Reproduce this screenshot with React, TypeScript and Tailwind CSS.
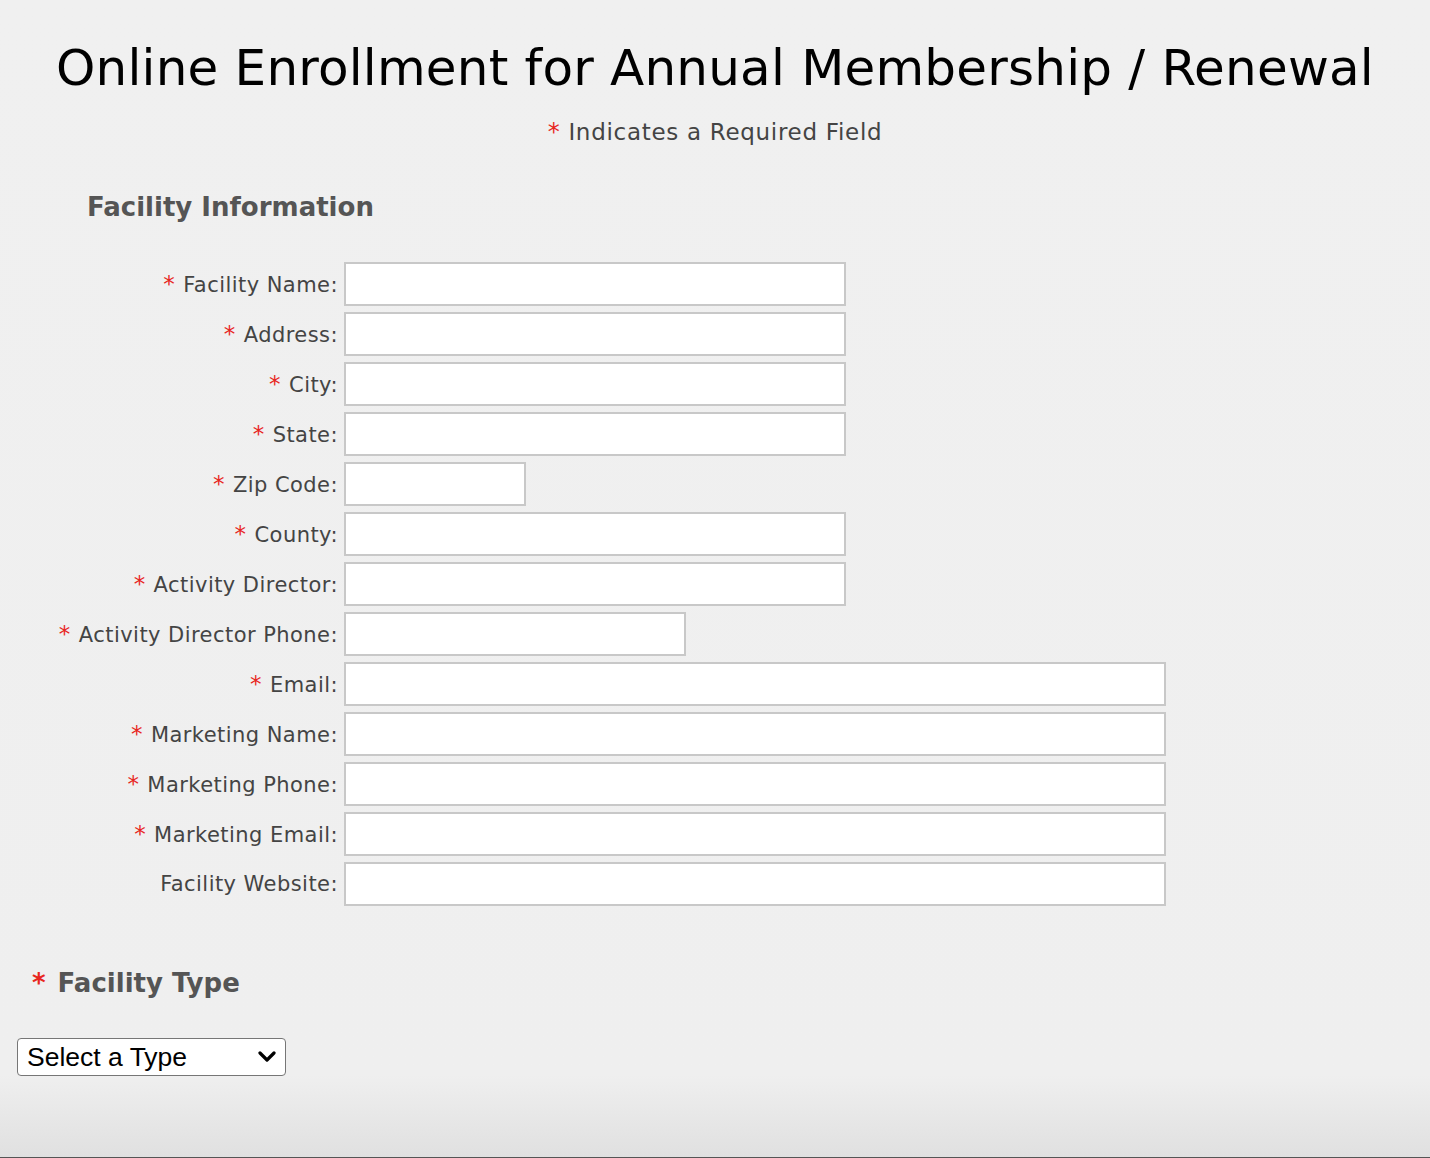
import React from "react";

const rows: { label: string; req: boolean; w: string }[] = [
  { label: "Facility Name", req: true, w: "w-[502px]" },
  { label: "Address", req: true, w: "w-[502px]" },
  { label: "City", req: true, w: "w-[502px]" },
  { label: "State", req: true, w: "w-[502px]" },
  { label: "Zip Code", req: true, w: "w-[182px]" },
  { label: "County", req: true, w: "w-[502px]" },
  { label: "Activity Director", req: true, w: "w-[502px]" },
  { label: "Activity Director Phone", req: true, w: "w-[342px]" },
  { label: "Email", req: true, w: "w-[822px]" },
  { label: "Marketing Name", req: true, w: "w-[822px]" },
  { label: "Marketing Phone", req: true, w: "w-[822px]" },
  { label: "Marketing Email", req: true, w: "w-[822px]" },
  { label: "Facility Website", req: false, w: "w-[822px]" },
];

export default function App() {
  return (
    <div className="min-h-[1158px] w-full bg-[linear-gradient(to_bottom,#f0f0f0_0px,#efefef_1075px,#e0e0e0_1157px)] border-b border-[#555] font-['Verdana','DejaVu_Sans',sans-serif] text-[#444] flex flex-col">
      <h1 className="text-center text-black text-[50px] leading-none pt-[43px] tracking-[0.2px]">
        Online Enrollment for Annual Membership / Renewal
      </h1>
      <p className="text-center text-[23px] mt-[27px] leading-none tracking-[0.7px]">
        <span className="text-[#e8261f] text-[24px]">*</span> Indicates a Required Field
      </p>
      <h2 className="font-bold text-[26px] text-[#555] ml-[87px] mt-[50px] leading-none">
        Facility Information
      </h2>
      <div className="flex flex-col gap-[6px] mt-[42px]">
        {rows.map((r) => (
          <div key={r.label} className="flex items-center">
            <label className="w-[338px] text-right text-[21px] leading-none tracking-[0.45px] whitespace-nowrap">
              {r.req && <span className="text-[#e8261f] text-[23px] mr-[8px]">*</span>}
              {r.label}:
            </label>
            <input
              type="text"
              className={`${r.w} h-[44px] ml-[6px] bg-white border-2 border-[#c8c8c8] outline-none`}
            />
          </div>
        ))}
      </div>
      <h2 className="font-bold text-[26px] text-[#555] ml-[32px] mt-[64px] leading-none">
        <span className="text-[#e8261f] mr-[12px]">*</span>Facility Type
      </h2>
      <div className="ml-[17px] mt-[42px]">
        <div className="relative w-[269px] h-[38px] bg-white border border-[#767676] rounded-[4px] flex items-center">
          <span className="font-['Liberation_Sans',Arial,sans-serif] text-black text-[26.5px] ml-[9px] leading-none">
            Select a Type
          </span>
          <svg className="absolute right-[9px] top-[12px]" width="18" height="12" viewBox="0 0 18 12">
            <path d="M2 2 L9 9 L16 2" fill="none" stroke="black" strokeWidth="3.2" strokeLinecap="round" strokeLinejoin="round" />
          </svg>
        </div>
      </div>
    </div>
  );
}
